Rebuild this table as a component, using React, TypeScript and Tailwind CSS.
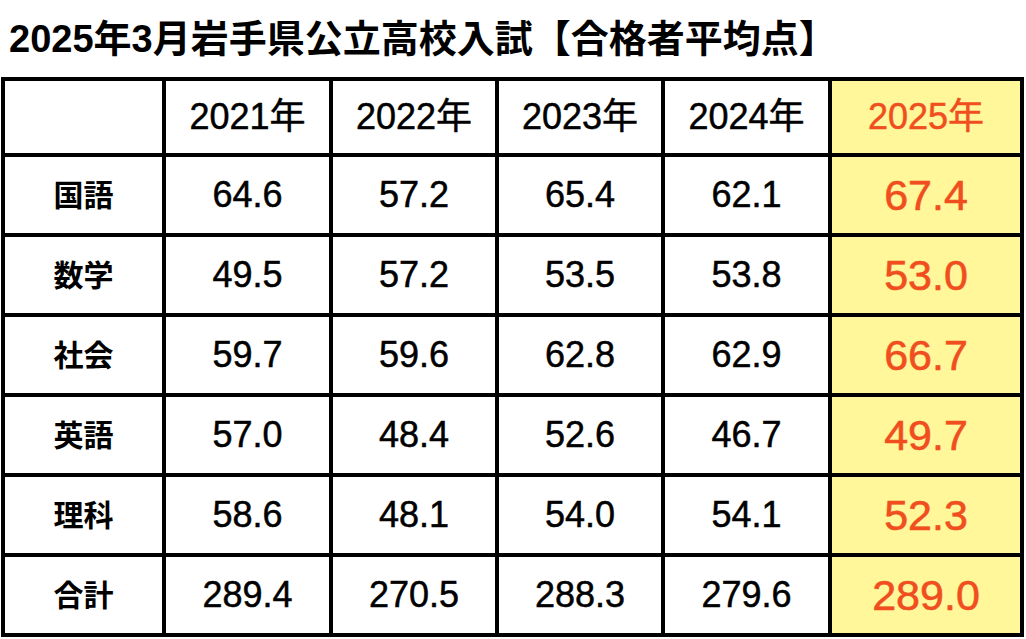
import React from "react";

const years = ["2021年", "2022年", "2023年", "2024年"];
const rows: { label: string; vals: string[]; last: string }[] = [
  { label: "国語", vals: ["64.6", "57.2", "65.4", "62.1"], last: "67.4" },
  { label: "数学", vals: ["49.5", "57.2", "53.5", "53.8"], last: "53.0" },
  { label: "社会", vals: ["59.7", "59.6", "62.8", "62.9"], last: "66.7" },
  { label: "英語", vals: ["57.0", "48.4", "52.6", "46.7"], last: "49.7" },
  { label: "理科", vals: ["58.6", "48.1", "54.0", "54.1"], last: "52.3" },
  { label: "合計", vals: ["289.4", "270.5", "288.3", "279.6"], last: "289.0" },
];

const font = { fontFamily: '"Liberation Sans", "Noto Sans CJK JP", sans-serif' };

export default function App() {
  return (
    <div className="w-[1026px] h-[639px] bg-white overflow-hidden" style={font}>
      <div className="h-[77px] pl-[9px] pt-[16px]">
        <h1 className="text-[38px] leading-[46px] font-bold text-black">
          2025年3月岩手県公立高校入試【合格者平均点】
        </h1>
      </div>
      <div className="ml-[1px] w-[1023px] bg-black p-[4px] grid gap-[4px] grid-cols-[157px_163px_162px_162px_163px_188px] grid-rows-[72px_repeat(6,76px)]">
        <div className="bg-white" />
        {years.map((y) => (
          <div key={y} className="bg-white flex items-center justify-center text-[36px] text-black [-webkit-text-stroke:0.5px_currentColor]">
            {y}
          </div>
        ))}
        <div className="bg-[#fff799] flex items-center justify-center text-[36px] text-[#f04e1e] [-webkit-text-stroke:0.5px_currentColor]">
          2025年
        </div>
        {rows.map((r) => (
          <React.Fragment key={r.label}>
            <div className="bg-white flex items-center justify-center text-[30px] font-bold text-black">
              {r.label}
            </div>
            {r.vals.map((v, i) => (
              <div key={i} className="bg-white flex items-center justify-center text-[36px] text-black [-webkit-text-stroke:0.5px_currentColor]">
                {v}
              </div>
            ))}
            <div className="bg-[#fff799] flex items-center justify-center text-[43px] text-[#f04e1e] [-webkit-text-stroke:0.6px_currentColor]">
              {r.last}
            </div>
          </React.Fragment>
        ))}
      </div>
    </div>
  );
}
